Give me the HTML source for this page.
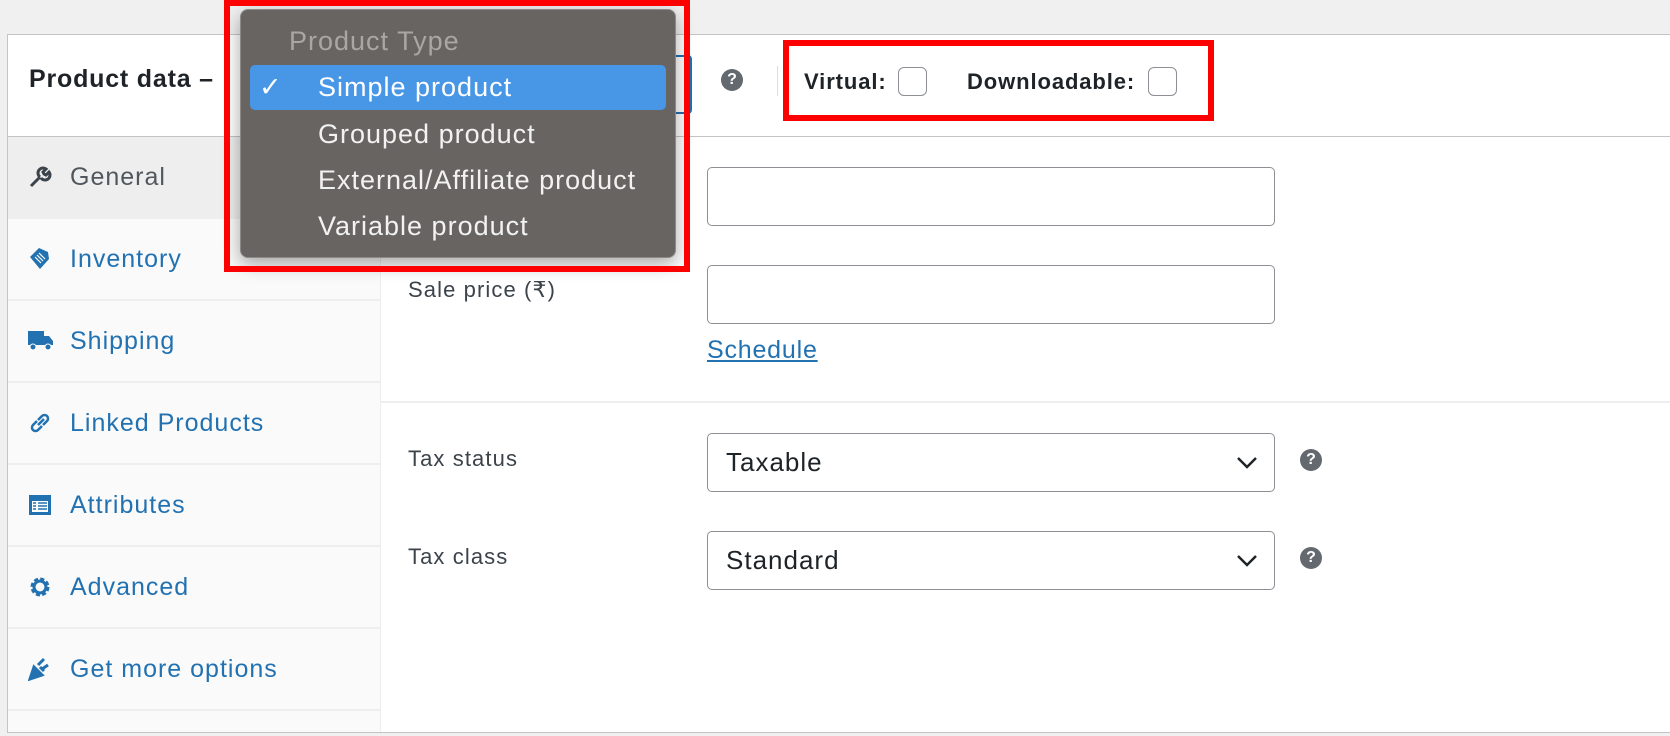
<!DOCTYPE html>
<html><head><meta charset="utf-8"><style>
*{margin:0;padding:0;box-sizing:border-box}
body{width:1670px;height:736px;background:#f0f0f1;position:relative;overflow:hidden;font-family:"Liberation Sans",sans-serif;color:#1d2327}
.a{position:absolute}
.panel{left:7px;top:34px;width:1670px;height:699px;background:#fff;border:1px solid #c3c4c7}
.side{left:8px;top:137px;width:373px;height:595px;background:#fafafa;border-right:1px solid #eee}
.item{position:absolute;left:0;width:373px;height:82px;border-bottom:2px solid #eee;font-size:25px;letter-spacing:1px;color:#2271b1;padding-left:62px;line-height:80px}
.item svg{position:absolute;left:20px;top:28px}
.lbl{font-size:22px;letter-spacing:1.1px;color:#3c434a}
.inp{border:1px solid #8c8f94;border-radius:5px;background:#fff}
.sel{font-size:26px;letter-spacing:1px;color:#1d2327;padding-left:18px;line-height:57px}
.q{width:22px;height:22px;border-radius:50%;background:#646970;color:#fff;font-size:16px;font-weight:bold;text-align:center;line-height:22px}
.cb{width:29px;height:29px;border:1.5px solid #8c8f94;border-radius:6px;background:#fff}
.dd{font-size:27px;letter-spacing:1px;color:#f2f2f2}
</style></head><body>
<div class="a panel"></div>
<div class="a" style="left:8px;top:136px;width:1670px;border-top:1px solid #c3c4c7"></div>
<div class="a" style="left:29px;top:65px;font-size:25px;letter-spacing:0.8px;font-weight:bold">Product data –</div>
<div class="a" style="left:560px;top:55px;width:132px;height:59px;border:2px solid #2271b1;border-radius:4px;background:#fff"></div>
<div class="a q" style="left:721px;top:69px">?</div>
<div class="a" style="left:777px;top:66px;width:1px;height:30px;background:#ddd"></div>
<div class="a" style="left:804px;top:69px;font-size:22px;letter-spacing:0.9px;font-weight:bold">Virtual:</div>
<div class="a cb" style="left:898px;top:67px"></div>
<div class="a" style="left:967px;top:69px;font-size:22px;letter-spacing:0.9px;font-weight:bold">Downloadable:</div>
<div class="a cb" style="left:1148px;top:67px"></div>
<div class="a" style="left:783px;top:40px;width:431px;height:81px;border:6px solid #f00"></div>

<div class="a side">
<div class="item" style="top:0;background:#eee;color:#50575e"><svg width="24" height="24" viewBox="0 0 24 24"><path d="M3 21l9-9M12 12a5 5 0 0 1 6-8l-3 3 1 2 2 1 3-3a5 5 0 0 1-8 6" stroke="#3c434a" stroke-width="3" fill="none"/></svg>General</div>
<div class="item" style="top:82px"><svg width="24" height="24" viewBox="0 0 24 24"><path d="M2 10l9-9 9 4 1 7-9 10z" fill="#2271b1"/><path d="M7 10l6 6M9 8l6 6M11 6l6 6" stroke="#fff" stroke-width="1.2"/></svg>Inventory</div>
<div class="item" style="top:164px"><svg width="26" height="22" viewBox="0 0 26 22"><rect x="0" y="2" width="16" height="14" fill="#2271b1"/><path d="M16 7h5l4 5v4h-9z" fill="#2271b1"/><circle cx="5" cy="18" r="3" fill="#2271b1" stroke="#fff"/><circle cx="20" cy="18" r="3" fill="#2271b1" stroke="#fff"/></svg>Shipping</div>
<div class="item" style="top:246px"><svg width="24" height="24" viewBox="0 0 24 24"><path d="M10 14l6-6M9 10l-4 4a3 3 0 0 0 5 5l4-4M15 14l4-4a3 3 0 0 0-5-5l-4 4" stroke="#2271b1" stroke-width="2.5" fill="none"/></svg>Linked Products</div>
<div class="item" style="top:328px"><svg width="24" height="24" viewBox="0 0 24 24"><rect x="1" y="2" width="22" height="20" fill="#2271b1"/><rect x="4" y="8" width="16" height="11" fill="#fff"/><path d="M5 10h3M10 10h9M5 13h3M10 13h9M5 16h3M10 16h9" stroke="#2271b1" stroke-width="1.5"/></svg>Attributes</div>
<div class="item" style="top:410px"><svg width="24" height="24" viewBox="0 0 24 24"><circle cx="12" cy="12" r="7" fill="none" stroke="#2271b1" stroke-width="5" stroke-dasharray="3.5 2"/><circle cx="12" cy="12" r="6" fill="none" stroke="#2271b1" stroke-width="3"/></svg>Advanced</div>
<div class="item" style="top:492px"><svg width="24" height="24" viewBox="0 0 24 24"><path d="M2 22l4-12 8 8z M10 8l6-6M14 12l6-4M12 10l4 4" stroke="#2271b1" stroke-width="3" fill="#2271b1"/></svg>Get more options</div>
</div>

<div class="a lbl" style="left:408px;top:277px">Sale price (₹)</div>
<div class="a inp" style="left:707px;top:167px;width:568px;height:59px"></div>
<div class="a inp" style="left:707px;top:265px;width:568px;height:59px"></div>
<div class="a" style="left:707px;top:336px;font-size:25px;letter-spacing:0.8px;color:#2271b1;text-decoration:underline">Schedule</div>
<div class="a" style="left:381px;top:401px;width:1300px;border-top:2px solid #eee"></div>
<div class="a lbl" style="left:408px;top:446px">Tax status</div>
<div class="a inp sel" style="left:707px;top:433px;width:568px;height:59px">Taxable</div>
<div class="a q" style="left:1300px;top:449px">?</div>
<div class="a lbl" style="left:408px;top:544px">Tax class</div>
<div class="a inp sel" style="left:707px;top:531px;width:568px;height:59px">Standard</div>
<div class="a q" style="left:1300px;top:547px">?</div>
<svg class="a" style="left:1236px;top:456px" width="22" height="14"><path d="M2 2l9 9 9-9" stroke="#1d2327" stroke-width="2.5" fill="none"/></svg>
<svg class="a" style="left:1236px;top:554px" width="22" height="14"><path d="M2 2l9 9 9-9" stroke="#1d2327" stroke-width="2.5" fill="none"/></svg>

<div class="a" style="left:240px;top:9px;width:436px;height:249px;background:#686462;border:1px solid #8d8a88;border-radius:8px;box-shadow:0 6px 18px rgba(0,0,0,.35)"></div>
<div class="a" style="left:250px;top:65px;width:416px;height:45px;background:#4896e6;border-radius:5px"></div>
<div class="a dd" style="left:289px;top:26px;color:#a9a6a4">Product Type</div>
<div class="a dd" style="left:259px;top:72px;color:#fff">✓</div>
<div class="a dd" style="left:318px;top:72px;color:#fff">Simple product</div>
<div class="a dd" style="left:318px;top:119px">Grouped product</div>
<div class="a dd" style="left:318px;top:165px">External/Affiliate product</div>
<div class="a dd" style="left:318px;top:211px">Variable product</div>
<div class="a" style="left:224px;top:0;width:466px;height:272px;border:6px solid #f00"></div>
</body></html>
